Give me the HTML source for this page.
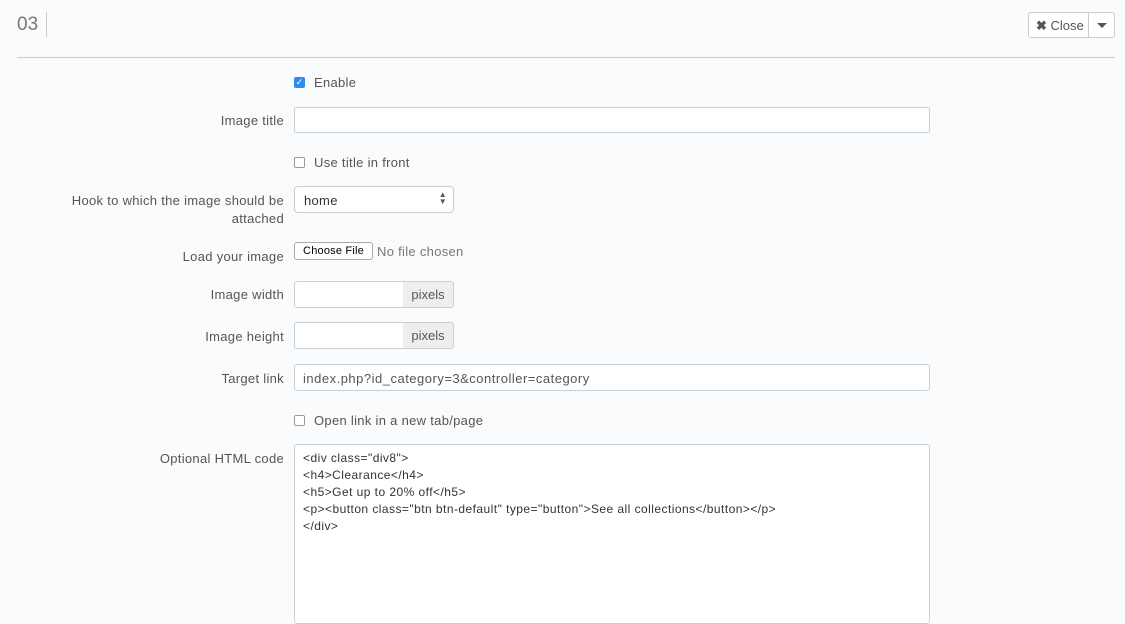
<!DOCTYPE html>
<html><head><style>
body{margin:0;background:#fafbfc;font-family:"Liberation Sans",sans-serif;font-size:13px;color:#555;width:1125px;height:608px;overflow:hidden;position:relative;letter-spacing:0.3px}
.a{position:absolute}
.lbl{position:absolute;right:841px;text-align:right;color:#555;line-height:18px}
.inp{position:absolute;left:294px;background:#fff;border:1px solid #c7d0d6;border-radius:3px;box-sizing:border-box}
.cb{position:absolute;left:294px;width:11px;height:11px;border:1px solid #999;border-radius:2px;background:#fff;box-sizing:border-box}
.ct{position:absolute;left:314px;color:#555}
.addon{position:absolute;left:403px;width:51px;height:27px;background:#eee;border:1px solid #c7d0d6;border-left:none;border-radius:0 3px 3px 0;box-sizing:border-box;text-align:center;line-height:25px;color:#555;letter-spacing:0}
</style></head><body>
<div class="a" style="left:17px;top:14px;font-size:19px;color:#777;letter-spacing:0">03</div>
<div class="a" style="left:46px;top:12px;width:1px;height:25px;background:#ccc"></div>
<div class="a" style="left:1028px;top:12px;width:87px;height:26px;border:1px solid #ccc;border-radius:3px;background:#fff;box-sizing:border-box"></div>
<div class="a" style="left:1088px;top:12px;width:1px;height:26px;background:#ccc"></div>
<div class="a" style="left:1036px;top:18px;color:#555;font-size:13px;letter-spacing:0"><b style="color:#555">✖</b> Close</div>
<div class="a" style="left:1097px;top:23px;width:0;height:0;border-left:5px solid transparent;border-right:5px solid transparent;border-top:5px solid #555"></div>
<div class="a" style="left:17px;top:57px;width:1098px;height:1px;background:#ccc"></div>

<div class="a" style="left:294px;top:77px;width:11px;height:11px;border-radius:2px;background:#2d8cf0;color:#fff;font-size:9px;line-height:11px;text-align:center">✓</div>
<div class="ct" style="top:75px">Enable</div>

<div class="lbl" style="top:112px">Image title</div>
<div class="inp" style="top:107px;width:636px;height:26px"></div>

<div class="cb" style="top:157px"></div>
<div class="ct" style="top:155px">Use title in front</div>

<div class="lbl" style="top:192px">Hook to which the image should be<br>attached</div>
<div class="inp" style="top:186px;width:160px;height:27px;border-radius:4px;border-color:#ccc"><span style="position:absolute;left:9px;top:6px;color:#333">home</span><span style="position:absolute;right:6px;top:4px;font-size:8px;line-height:7px;color:#555">▲<br>▼</span></div>

<div class="lbl" style="top:248px">Load your image</div>
<div class="a" style="left:294px;top:242px;width:79px;height:18px;border:1px solid #aaa;border-radius:3px;background:#fff;box-sizing:border-box;font-size:11px;color:#000;text-align:center;line-height:16px;letter-spacing:0.2px">Choose File</div>
<div class="a" style="left:377px;top:244px;color:#777">No file chosen</div>

<div class="lbl" style="top:286px">Image width</div>
<div class="inp" style="top:281px;width:110px;height:27px;border-radius:3px 0 0 3px"></div>
<div class="addon" style="top:281px">pixels</div>

<div class="lbl" style="top:328px">Image height</div>
<div class="inp" style="top:322px;width:110px;height:27px;border-radius:3px 0 0 3px"></div>
<div class="addon" style="top:322px">pixels</div>

<div class="lbl" style="top:370px">Target link</div>
<div class="inp" style="top:364px;width:636px;height:27px"><span style="position:absolute;left:8px;top:6px;color:#555;letter-spacing:0.5px">index.php?id_category=3&amp;controller=category</span></div>

<div class="cb" style="top:415px"></div>
<div class="ct" style="top:413px">Open link in a new tab/page</div>

<div class="lbl" style="top:450px">Optional HTML code</div>
<div class="inp" style="top:444px;width:636px;height:180px"><div style="position:absolute;left:8px;top:5px;font-size:12px;line-height:17px;color:#333;white-space:pre;letter-spacing:0.45px">&lt;div class="div8"&gt;
&lt;h4&gt;Clearance&lt;/h4&gt;
&lt;h5&gt;Get up to 20% off&lt;/h5&gt;
&lt;p&gt;&lt;button class="btn btn-default" type="button"&gt;See all collections&lt;/button&gt;&lt;/p&gt;
&lt;/div&gt;</div></div>
</body></html>
